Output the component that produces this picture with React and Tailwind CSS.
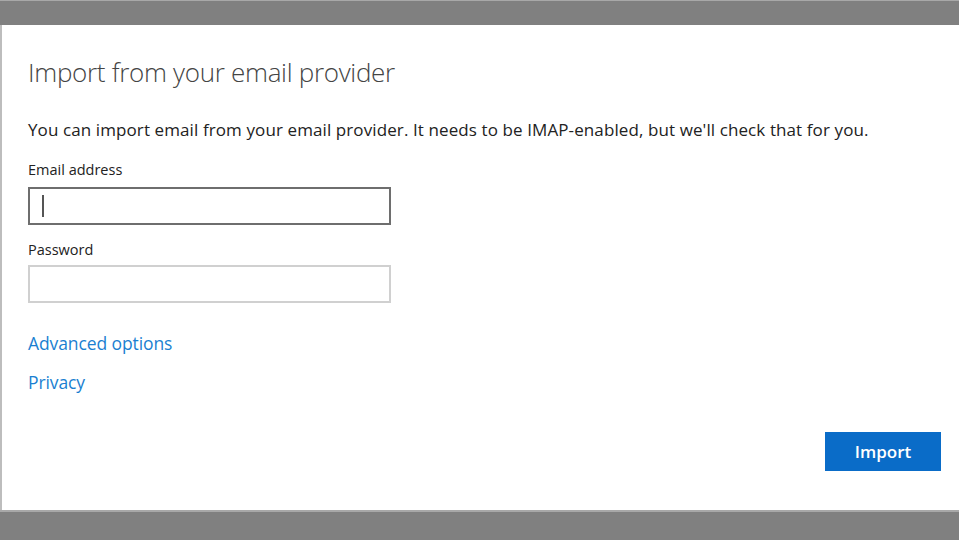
import React from "react";

const font = { fontFamily: '"Open Sans", "Noto Sans", sans-serif' };

export default function App() {
    return (
        <div className="w-[959px] h-[540px] flex flex-col bg-white overflow-hidden" style={font}>
            <div className="h-[25px] bg-[#808080] border-t border-[#a8a8a8]" />
            <div className="flex-1 flex flex-col border-l-2 border-[#bdbdbd] pl-[26px] pr-[18px]">
                <h1 className="mt-[30px] text-[26px] font-light text-[#444] tracking-[-0.3px] leading-[34px]">
                    Import from your email provider
                </h1>
                <p className="mt-[29px] text-[17px] text-[#222] leading-[24px] tracking-[0.1px]">
                    You can import email from your email provider. It needs to be IMAP-enabled, but we'll check that for you.
                </p>
                <label className="mt-[18px] text-[14.5px] text-[#222] leading-[20px]">Email address</label>
                <div className="mt-[7px] w-[363px] h-[38px] border-2 border-[#6e6e6e] flex items-center pl-[12px]">
                    <div className="w-[2px] h-[22px] bg-[#555]" />
                </div>
                <label className="mt-[15px] text-[14.5px] text-[#222] leading-[20px]">Password</label>
                <div className="mt-[5px] w-[363px] h-[38px] border-2 border-[#d0d0d0]" />
                <a className="mt-[28px] text-[17.5px] text-[#1b7fd1] leading-[24px] tracking-[-0.1px] w-fit">Advanced options</a>
                <a className="mt-[15px] text-[17.5px] text-[#1b7fd1] leading-[24px] tracking-[-0.1px] w-fit">Privacy</a>
                <div className="flex-1 flex items-start justify-end pt-[38px]">
                    <button className="w-[116px] h-[39px] bg-[#0a6cc8] text-white text-[17px] font-semibold">
                        Import
                    </button>
                </div>
            </div>
            <div className="h-[30px] bg-[#808080] border-t-2 border-[#a8a8a8]" />
        </div>
    );
}
